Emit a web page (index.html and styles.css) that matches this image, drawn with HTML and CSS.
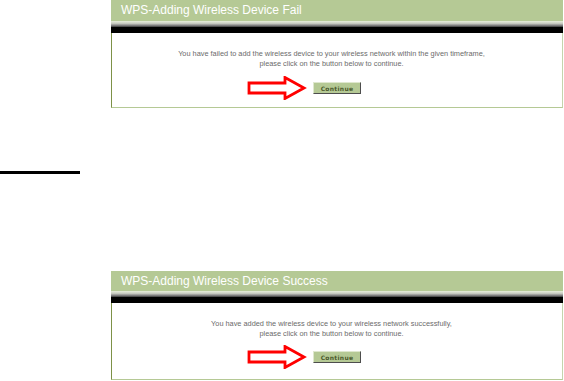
FILE: index.html
```html
<!DOCTYPE html>
<html>
<head>
  <title>WPS</title>
  <link rel="stylesheet" href="styles.css">
</head>
<body>
  <div class="panel panel-fail">
    <div class="panel-title">WPS-Adding Wireless Device Fail</div>
    <div class="panel-stripe"></div>
    <div class="panel-bar"></div>
    <div class="panel-body">
      <p class="message">You have failed to add the wireless device to your wireless network within the given timeframe,<br>please click on the button below to continue.</p>
      <div class="action">
        <svg class="arrow" width="60" height="24" viewBox="0 0 60 24">
          <path d="M2 7 H38 V1.5 L57 12 L38 22.5 V17 H2 Z" fill="#fff" stroke="#f00" stroke-width="2.8" stroke-linejoin="miter"/>
        </svg>
        <button class="btn">Continue</button>
      </div>
    </div>
  </div>

  <div class="rule"></div>

  <div class="panel panel-success">
    <div class="panel-title">WPS-Adding Wireless Device Success</div>
    <div class="panel-stripe"></div>
    <div class="panel-bar"></div>
    <div class="panel-body">
      <p class="message">You have added the wireless device to your wireless network successfully,<br>please click on the button below to continue.</p>
      <div class="action">
        <svg class="arrow" width="60" height="24" viewBox="0 0 60 24">
          <path d="M2 7 H38 V1.5 L57 12 L38 22.5 V17 H2 Z" fill="#fff" stroke="#f00" stroke-width="2.8" stroke-linejoin="miter"/>
        </svg>
        <button class="btn">Continue</button>
      </div>
    </div>
  </div>
</body>
</html>
```

FILE: styles.css
```css
body {
  margin: 0;
  background-color: #fff;
  font-family: "Liberation Sans", Arial, sans-serif;
}

.panel {
  margin-left: 111px;
  width: 452px;
}

.panel-success {
  margin-top: 97px;
}

.panel-title {
  height: 21px;
  line-height: 21px;
  padding-left: 10px;
  background-color: #b5c995;
  color: #fff;
  font-size: 12px;
}

.panel-success .panel-title {
  height: 20px;
  line-height: 20px;
}

.panel-stripe {
  height: 6px;
  background: linear-gradient(#e6edd9, #c9ccc2 40%, #8a8a8a 70%, #3a3a3a);
}

.panel-bar {
  height: 6px;
  background-color: #000;
}

.panel-body {
  box-sizing: border-box;
  height: 75px;
  border-left: 1px solid #7d9147;
  border-right: 1px solid #c5d4ad;
  border-bottom: 1px solid #b5c995;
  padding-top: 16px;
}

.panel-success .panel-body {
  height: 77px;
}

.message {
  margin: 0;
  padding-right: 11px;
  text-align: center;
  color: #6b6b6b;
  font-size: 7.35px;
  line-height: 10px;
}

.action {
  display: flex;
  justify-content: center;
  margin-top: 13px;
}

.panel-success .action {
  margin-top: 12px;
}

.arrow {
  position: absolute;
  margin-left: -121px;
  margin-top: -6px;
}

.btn {
  width: 48px;
  height: 12px;
  padding: 0;
  background-color: #b5c995;
  border: 1px solid;
  border-color: #dfe8cf #4d4d4d #4d4d4d #dfe8cf;
  color: #4a5a2c;
  font-family: "DejaVu Sans", Verdana, sans-serif;
  font-size: 6px;
  font-weight: bold;
  letter-spacing: 0.3px;
}

.rule {
  width: 80px;
  height: 3px;
  margin-top: 63px;
  background-color: #000;
}
```
